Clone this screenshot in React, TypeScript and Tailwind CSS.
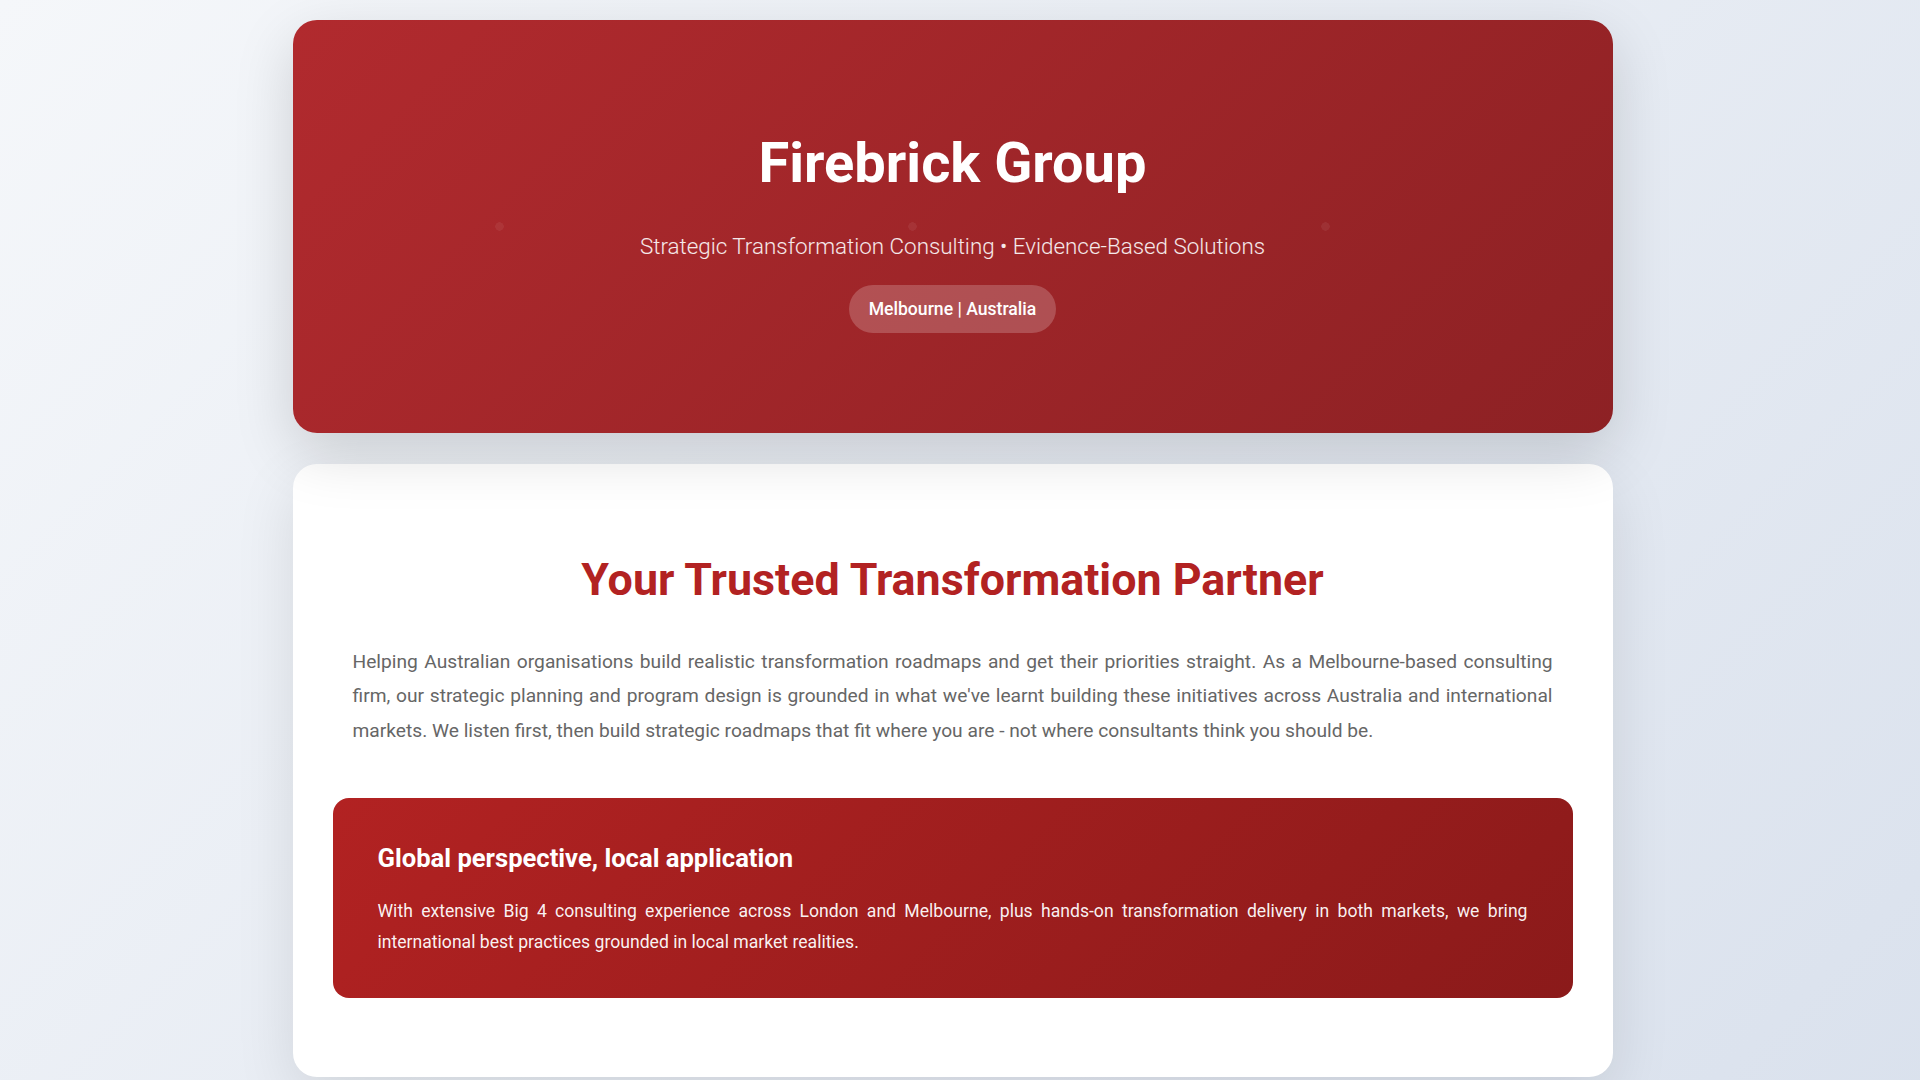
export default function App() {
  return (
    <div className="min-h-[3670px] bg-[linear-gradient(135deg,#f5f7fa_0%,#c3cfe2_100%)] pr-[15px] font-['Roboto','Liberation_Sans',sans-serif]">
      <div className="mx-auto max-w-[1400px] px-10 pt-5">
        {/* Hero */}
        <header className="relative z-10 overflow-hidden rounded-3xl bg-[linear-gradient(135deg,#b12a2e_0%,#8d2124_100%)] shadow-[0_20px_60px_rgba(0,0,0,0.15)]">
          <div className="bg-[radial-gradient(circle,rgba(255,255,255,0.06)_0px,rgba(255,255,255,0.06)_4px,transparent_4.5px)] bg-[length:413px_413px] px-10 pt-[110px] pb-[100px] text-center text-white">
            <h1 className="text-[56px] font-bold leading-[1.2]">Firebrick Group</h1>
            <p className="mt-[33px] text-[22.4px] font-light leading-[1.5] text-white/90">
              Strategic Transformation Consulting • Evidence-Based Solutions
            </p>
            <div className="mt-[21px] flex justify-center">
              <span className="flex h-12 items-center rounded-full bg-white/20 px-5 text-[17.6px] font-medium">
                Melbourne | Australia
              </span>
            </div>
          </div>
        </header>

        {/* Intro card */}
        <section className="mt-[31px] rounded-3xl bg-white px-10 pt-[89px] pb-[79px] shadow-[0_20px_60px_rgba(0,0,0,0.1)]">
          <h2 className="text-center text-[44.8px] font-bold leading-[1.2] text-[#b22222]">
            Your Trusted Transformation Partner
          </h2>
          <p className="mt-[38px] px-5 text-justify text-[19.2px] leading-[1.8] text-[#666]">
            Helping Australian organisations build realistic transformation roadmaps and get their priorities straight. As a
            Melbourne-based consulting firm, our strategic planning and program design is grounded in what we've learnt
            building these initiatives across Australia and international markets. We listen first, then build strategic
            roadmaps that fit where you are - not where consultants think you should be.
          </p>

          <div className="mt-[50px] rounded-2xl bg-[linear-gradient(135deg,#b22222_0%,#8b1a1a_100%)] px-[45px] pt-[45px] pb-[41px] text-white">
            <h3 className="text-[25.6px] font-bold leading-[1.2]">Global perspective, local application</h3>
            <p className="mt-[22px] text-justify text-[17.6px] leading-[1.74] text-white/95">
              With extensive Big 4 consulting experience across London and Melbourne, plus hands-on transformation delivery
              in both markets, we bring international best practices grounded in local market realities.
            </p>
          </div>
        </section>
      </div>
    </div>
  );
}
